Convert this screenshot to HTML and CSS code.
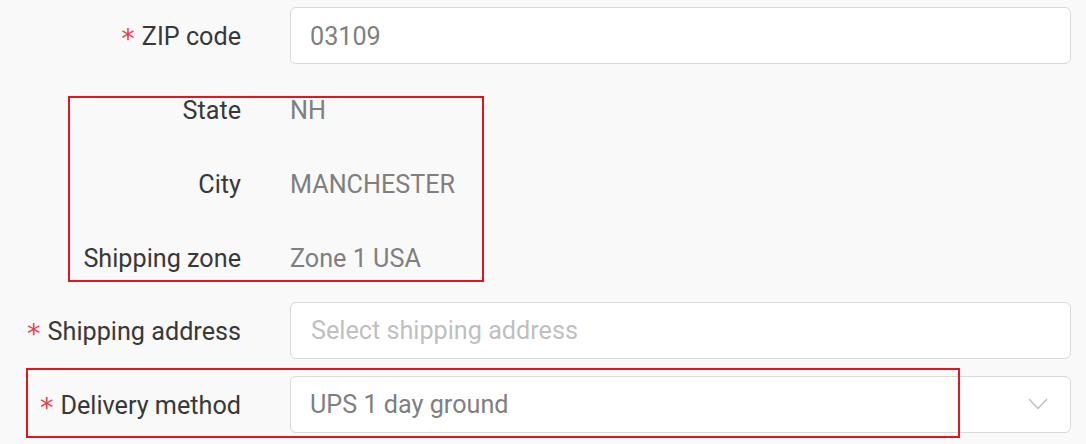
FILE: index.html
```html
<!DOCTYPE html>
<html lang="en">
<head>
<meta charset="utf-8">
<title>Shipping form</title>
<link rel="stylesheet" href="styles.css">
</head>
<body>
<form class="form">
  <div class="row">
    <label class="label"><span class="req">*</span>ZIP code</label>
    <div class="control"><div class="input"><span class="val">03109</span></div></div>
  </div>
  <div class="row">
    <label class="label">State</label>
    <div class="control"><span class="static">NH</span></div>
  </div>
  <div class="row">
    <label class="label">City</label>
    <div class="control"><span class="static">MANCHESTER</span></div>
  </div>
  <div class="row">
    <label class="label">Shipping zone</label>
    <div class="control"><span class="static">Zone 1 USA</span></div>
  </div>
  <div class="row">
    <label class="label"><span class="req">*</span>Shipping address</label>
    <div class="control"><div class="input"><span class="placeholder">Select shipping address</span></div></div>
  </div>
  <div class="row">
    <label class="label"><span class="req">*</span>Delivery method</label>
    <div class="control"><div class="input select"><span class="val">UPS 1 day ground</span>
      <svg class="chev" width="20" height="12" viewBox="0 0 20 12"><path d="M1 1 L10 10.5 L19 1" fill="none" stroke="#bdbdbd" stroke-width="1.4"/></svg>
    </div></div>
  </div>
  <div class="mark mark-info"></div>
  <div class="mark mark-delivery"></div>
</form>
</body>
</html>
```
FILE: styles.css
```css
html, body {
  margin: 0;
  padding: 0;
  background: #f9f9f9;
}
body {
  min-height: 444px;
  font-family: Roboto, "Noto Sans", Arial, sans-serif;
  font-size: 25.2px;
  color: #383838;
}
.form {
  position: relative;
  box-sizing: border-box;
  min-height: 444px;
  padding: 7px 15px 0 0;
  display: flex;
  flex-direction: column;
  gap: 16.5px;
}
.row {
  display: grid;
  grid-template-columns: 241px 1fr;
  column-gap: 49px;
  height: 57.2px;
  align-items: center;
}
.label {
  display: flex;
  justify-content: flex-end;
  align-items: center;
  gap: 7px;
  white-space: nowrap;
  color: #383838;
  line-height: 1;
  padding-top: 3px;
}
.req {
  font-family: "DejaVu Sans", sans-serif;
  color: #e8404a;
  font-size: 27px;
  line-height: 1;
  margin-top: 3px;
}
.control {
  height: 57px;
  display: flex;
  align-items: center;
}
.static {
  color: #7f7f7f;
  padding-top: 3px;
}
.input {
  box-sizing: border-box;
  width: 100%;
  height: 57px;
  background: #fff;
  border: 1px solid #d9d9d9;
  border-radius: 6px;
  padding: 1px 20px 0 19px;
  display: flex;
  align-items: center;
  justify-content: space-between;
}
.val {
  color: #7f7f7f;
}
.placeholder {
  color: #bfbfbf;
  margin-left: 1px;
}
.chev {
  margin-right: 2px;
  margin-top: -2px;
}
.mark {
  position: absolute;
  box-sizing: border-box;
  border: 2px solid #e3161e;
  pointer-events: none;
}
.mark-info {
  left: 68px;
  top: 96px;
  width: 416px;
  height: 186px;
}
.mark-delivery {
  left: 26px;
  top: 368px;
  width: 934px;
  height: 70px;
}
```
